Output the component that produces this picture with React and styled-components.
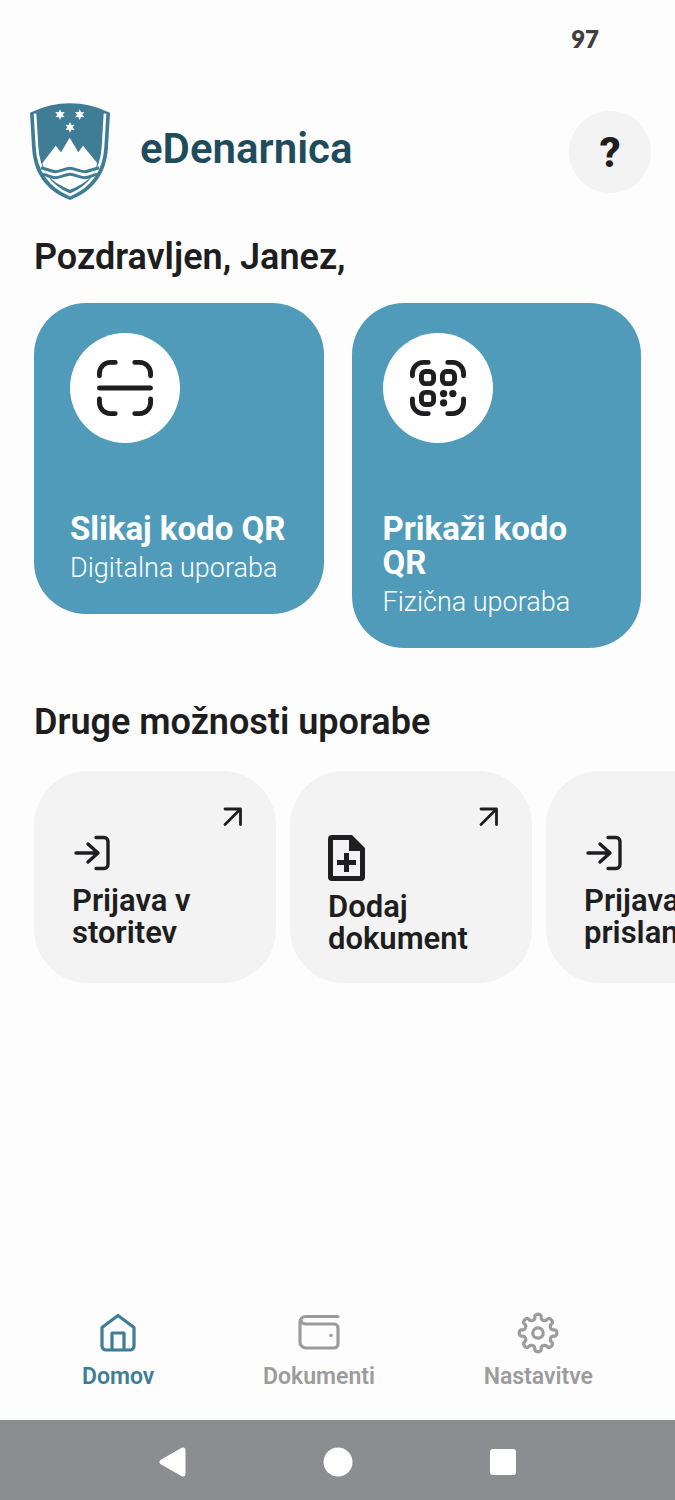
import React from "react";
import styled, { createGlobalStyle } from "styled-components";

const GlobalStyle = createGlobalStyle`
  * {
    box-sizing: border-box;
  }
  body {
    margin: 0;
    background: #fdfdfd;
    color: #1e1e20;
    font-family: Roboto, "Noto Sans", sans-serif;
  }
  button {
    border: 0;
    padding: 0;
    background: none;
    color: inherit;
    font: inherit;
    text-align: left;
    cursor: pointer;
  }
  svg {
    display: block;
  }
`;

const Screen = styled.div`
  display: flex;
  flex-direction: column;
  min-height: 100vh;
  overflow: hidden;
`;

const StatusBar = styled.div`
  display: flex;
  justify-content: flex-end;
  padding: 24px 76px 0 0;
  color: #3f3f41;
  font-family: Lato, sans-serif;
  font-size: 24px;
  font-weight: 800;
  line-height: 30px;
`;

const Header = styled.header`
  display: flex;
  align-items: center;
  padding: 49px 24px 0 30px;
`;

const AppName = styled.h1`
  flex: 1;
  margin: 0 0 6px 30px;
  color: #1f4c5d;
  font-size: 42px;
  font-weight: 600;
  line-height: 48px;
`;

const HelpButton = styled.button`
  && {
    width: 82px;
    height: 82px;
    padding-top: 2px;
    border-radius: 50%;
    background: #f3f3f3;
    font-size: 42px;
    font-weight: 800;
    text-align: center;
  }
`;

const Main = styled.main`
  padding: 33px 34px;
`;

const Heading = styled.h2`
  margin: 0;
  font-size: 36px;
  font-weight: 600;
  line-height: 48px;
`;

const Cards = styled.div`
  display: grid;
  grid-template-columns: 1fr 1fr;
  align-items: start;
  gap: 28px;
  margin: 22px 0 50px;
`;

const Card = styled.button`
  && {
    padding: 30px 24px 29px ${(props) => (props.$narrow ? "31px" : "36px")};
    border-radius: 52px;
    background: #519bba;
    color: #fff;
  }
`;

const IconDisc = styled.span`
  display: flex;
  align-items: center;
  justify-content: center;
  width: 110px;
  height: 110px;
  margin-bottom: 69px;
  border-radius: 50%;
  background: #fff;
  color: #1e1e20;
`;

const CardTitle = styled.span`
  display: block;
  font-size: 33px;
  font-weight: 700;
  line-height: 34px;
`;

const CardText = styled.span`
  display: block;
  margin-top: 5px;
  font-size: 27px;
  font-weight: 300;
  line-height: 34px;
`;

const Tiles = styled.div`
  display: flex;
  gap: 14px;
  margin: 25px -34px 0 0;
  overflow: hidden;
`;

const Tile = styled.button`
  && {
    display: flex;
    flex: 0 0 auto;
    flex-direction: column;
    justify-content: flex-start;
    width: 242px;
    min-height: 212px;
    padding: 35px 32px 24px 38px;
    border-radius: 54px;
    background: #f3f3f3;
  }
`;

const TileArrow = styled.span`
  align-self: flex-end;
  margin-bottom: 7px;
`;

const TileTitle = styled.span`
  margin-top: ${(props) => (props.$tight ? "10px" : "14px")};
  font-size: 31px;
  font-weight: 600;
  line-height: 32px;
`;

const TabBar = styled.nav`
  display: flex;
  justify-content: space-between;
  margin-top: auto;
  padding: 0 82px 29px;
`;

const Tab = styled.button`
  && {
    display: flex;
    flex-direction: column;
    align-items: center;
    gap: 9px;
    color: ${(props) => (props.$active ? "#3f7d96" : "#9c9c9c")};
    font-size: 23px;
    font-weight: 600;
    line-height: 28px;
  }
`;

const SystemBar = styled.div`
  display: grid;
  grid-template-columns: repeat(3, 165px);
  justify-content: center;
  height: 80px;
  padding-top: 3px;
  background: #8c8d91;
`;

const SystemButton = styled.button`
  && {
    display: flex;
    align-items: center;
    justify-content: center;
  }
`;

const STAR = "M0-16L4-7L14-8L8 0L14 8L4 7L0 16L-4 7L-14 8L-8 0L-14-8L-4-7Z";

const Crest = () => (
  <svg width="80" height="97" viewBox="45 38 240 291" aria-hidden="true">
    <path
      fill="#3f7d96"
      d="M45 67Q165 11 285 67L279 170C275 245 240 300 165 329C90 300 55 245 51 170Z"
    />
    <path
      fill="none"
      stroke="#fff"
      strokeWidth="8"
      d="M60 70L66 170C70 237 102 287 165 314C228 287 260 237 264 170L270 70"
    />
    <g fill="#fff">
      <path d={STAR} transform="translate(135 73)" />
      <path d={STAR} transform="translate(194 73)" />
      <path d={STAR} transform="translate(165 111)" />
      <path d="M82 219L122 166L138 186L164 142L190 186L204 166L247 219L238 247C222 268 200 284 165 298C130 284 108 268 92 247Z" />
    </g>
    <g fill="none" stroke="#3f7d96" strokeWidth="9">
      <path d="M78 233C92 233 106 244 122 244S150 234 165 234S192 244 208 244S238 233 252 233" />
      <path d="M80 252C94 252 106 262 122 262S150 252 165 252S192 262 208 262S236 252 250 252" />
    </g>
  </svg>
);

const Corners = () => (
  <path d="M3 8.500V7.500a4.500 4.500 0 0 1 4.500-4.500h2M17.500 3h2a4.500 4.500 0 0 1 4.500 4.500v1M24 18v1.500a4.500 4.500 0 0 1-4.500 4.500h-2M9.500 24h-2A4.500 4.500 0 0 1 3 19.500V18" />
);

const ScanIcon = ({ children }) => (
  <svg
    width="56"
    height="56"
    viewBox="2 2 23 23"
    fill="none"
    stroke="currentColor"
    strokeWidth="2"
    strokeLinecap="round"
    aria-hidden="true"
  >
    <Corners />
    {children}
  </svg>
);

const QrDots = () => (
  <>
    <rect x="6.700" y="6.700" width="5" height="5" rx="1.700" />
    <rect x="15.300" y="6.700" width="5" height="5" rx="1.700" />
    <rect x="6.700" y="15.300" width="5" height="5" rx="1.700" />
    <g fill="currentColor" stroke="none">
      <circle cx="15.800" cy="15.800" r="1.500" />
      <circle cx="19.600" cy="15.800" r="1.500" />
      <circle cx="15.800" cy="19.600" r="1.500" />
    </g>
  </>
);

const LoginIcon = () => (
  <svg
    width="40"
    height="36"
    viewBox="0 0 40 36"
    fill="none"
    stroke="currentColor"
    strokeWidth="3.400"
    strokeLinecap="round"
    strokeLinejoin="round"
    aria-hidden="true"
  >
    <path d="M4 18h22M16 9L26 18L16 27M24 2.500h8a4 4 0 0 1 4 4v23a4 4 0 0 1-4 4h-8" />
  </svg>
);

const AddDocumentIcon = () => (
  <svg width="37" height="46" viewBox="0 0 37 46" aria-hidden="true">
    <path
      fill="currentColor"
      fillRule="evenodd"
      d="M4 0H24L37 13V42a4 4 0 0 1-4 4H4a4 4 0 0 1-4-4V4a4 4 0 0 1 4-4ZM5 5V41H32V16H21V5ZM16 18h5v7h7v5h-7v7h-5v-7H9v-5h7Z"
    />
  </svg>
);

const ArrowIcon = () => (
  <svg
    width="22"
    height="22"
    viewBox="0 0 22 22"
    fill="none"
    stroke="currentColor"
    strokeWidth="2.800"
    strokeLinecap="round"
    strokeLinejoin="round"
    aria-hidden="true"
  >
    <path d="M3 3H18.500V18.500M18.500 3L3 18.500" />
  </svg>
);

const TabIcon = ({ children }) => (
  <svg
    width="42"
    height="42"
    viewBox="0 0 42 42"
    fill="none"
    stroke="currentColor"
    strokeWidth="3.200"
    strokeLinecap="round"
    strokeLinejoin="round"
    aria-hidden="true"
  >
    {children}
  </svg>
);

// eight rounded teeth around the hub
const gearPath = () => {
  const points = [];
  for (let i = 0; i <= 160; i++) {
    const angle = (i / 160) * Math.PI * 2;
    const radius = 16.2 + 2.6 * Math.cos(angle * 8);
    const bulge = angle + 0.05 * Math.sin(angle * 16);
    points.push(
      `${(21 + radius * Math.sin(bulge)).toFixed(2)} ${(21 - radius * Math.cos(bulge)).toFixed(2)}`
    );
  }
  return `M${points.join("L")}Z`;
};

const tiles = [
  { title: "Prijava v storitev", icon: <LoginIcon /> },
  { title: "Dodaj dokument", icon: <AddDocumentIcon />, tight: true },
  { title: "Prijava s prislanjanjem", icon: <LoginIcon /> },
];

const App = () => {
  return (
    <Screen>
      <GlobalStyle />
      <StatusBar>97</StatusBar>
      <Header>
        <Crest />
        <AppName>eDenarnica</AppName>
        <HelpButton aria-label="Pomoč">?</HelpButton>
      </Header>
      <Main>
        <Heading>Pozdravljen, Janez,</Heading>
        <Cards>
          <Card>
            <IconDisc>
              <ScanIcon>
                <path d="M3 13.500h21" />
              </ScanIcon>
            </IconDisc>
            <CardTitle>Slikaj kodo QR</CardTitle>
            <CardText>Digitalna uporaba</CardText>
          </Card>
          <Card $narrow>
            <IconDisc>
              <ScanIcon>
                <QrDots />
              </ScanIcon>
            </IconDisc>
            <CardTitle>Prikaži kodo QR</CardTitle>
            <CardText>Fizična uporaba</CardText>
          </Card>
        </Cards>
        <Heading>Druge možnosti uporabe</Heading>
        <Tiles>
          {tiles.map((tile) => (
            <Tile key={tile.title}>
              <TileArrow>
                <ArrowIcon />
              </TileArrow>
              {tile.icon}
              <TileTitle $tight={tile.tight}>{tile.title}</TileTitle>
            </Tile>
          ))}
        </Tiles>
      </Main>
      <TabBar>
        <Tab $active>
          <TabIcon>
            <path d="M5 15.500L21 3.500L37 15.500V34a4 4 0 0 1-4 4H9a4 4 0 0 1-4-4ZM15 38V21H27V38" />
          </TabIcon>
          Domov
        </Tab>
        <Tab>
          <TabIcon>
            <path d="M40 4.500H7.500a5.500 5.500 0 0 0-5.500 5.500V30a6 6 0 0 0 6 6H36a4 4 0 0 0 4-4V16a4 4 0 0 0-4-4H8a5 4 0 0 1-5-4" />
            <circle cx="33" cy="23.500" r="1.800" fill="currentColor" stroke="none" />
          </TabIcon>
          Dokumenti
        </Tab>
        <Tab>
          <TabIcon>
            <path d={gearPath()} />
            <circle cx="21" cy="21" r="5.200" />
          </TabIcon>
          Nastavitve
        </Tab>
      </TabBar>
      <SystemBar>
        <SystemButton aria-label="Nazaj">
          <svg width="28" height="30" viewBox="0 0 28 30" aria-hidden="true">
            <path
              d="M3 15L24 3V27Z"
              fill="#fff"
              stroke="#fff"
              strokeWidth="5"
              strokeLinejoin="round"
            />
          </svg>
        </SystemButton>
        <SystemButton aria-label="Domači zaslon">
          <svg width="30" height="30" viewBox="0 0 30 30" aria-hidden="true">
            <circle cx="15" cy="15" r="14.500" fill="#fff" />
          </svg>
        </SystemButton>
        <SystemButton aria-label="Nedavno">
          <svg width="26" height="26" viewBox="0 0 26 26" aria-hidden="true">
            <rect width="26" height="26" rx="3" fill="#fff" />
          </svg>
        </SystemButton>
      </SystemBar>
    </Screen>
  );
};

export default App;
